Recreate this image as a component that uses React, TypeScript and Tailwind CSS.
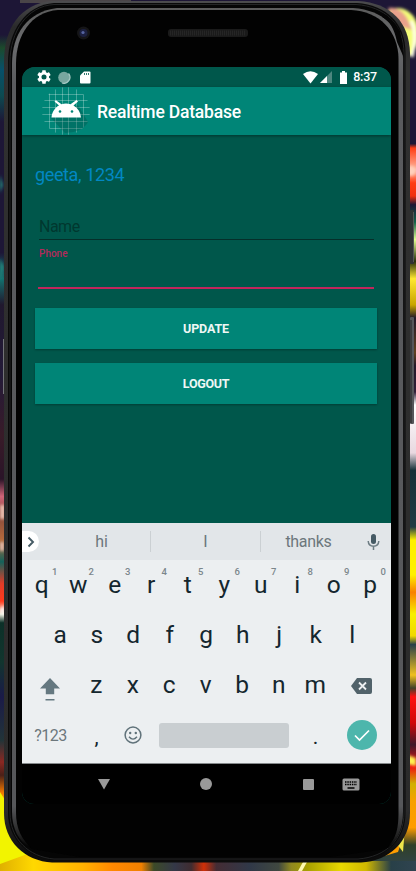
import React from 'react';

function Backdrop() {
  return (
    <svg className="absolute inset-0" width="416" height="871" viewBox="0 0 416 871">
      <defs>
        <filter id="soft" x="-20%" y="-20%" width="140%" height="140%">
          <feGaussianBlur stdDeviation="1.6" />
        </filter>
        <linearGradient id="leftEdge" x1="0" y1="0" x2="0" y2="1">
          <stop offset="0" stopColor="#1d1636" />
          <stop offset="0.04" stopColor="#1d1636" />
          <stop offset="0.055" stopColor="#1c4a2c" />
          <stop offset="0.08" stopColor="#07506a" />
          <stop offset="0.11" stopColor="#0d4a50" />
          <stop offset="0.14" stopColor="#1d1636" />
          <stop offset="0.29" stopColor="#1d1636" />
          <stop offset="0.32" stopColor="#14706e" />
          <stop offset="0.35" stopColor="#20182e" />
          <stop offset="0.43" stopColor="#231a38" />
          <stop offset="0.5" stopColor="#381b28" />
          <stop offset="0.55" stopColor="#2a1428" />
          <stop offset="0.57" stopColor="#d06478" />
          <stop offset="0.59" stopColor="#8a4a3c" />
          <stop offset="0.62" stopColor="#b46a3c" />
          <stop offset="0.645" stopColor="#14625a" />
          <stop offset="0.67" stopColor="#e03c28" />
          <stop offset="0.69" stopColor="#ff3a1c" />
          <stop offset="0.705" stopColor="#f0f0e0" />
          <stop offset="0.715" stopColor="#0c3028" />
          <stop offset="0.76" stopColor="#12352e" />
          <stop offset="0.8" stopColor="#1a1a48" />
          <stop offset="0.85" stopColor="#223438" />
          <stop offset="0.875" stopColor="#8a2822" />
          <stop offset="0.89" stopColor="#4a2018" />
          <stop offset="0.91" stopColor="#f07800" />
          <stop offset="0.93" stopColor="#e8f000" />
          <stop offset="0.96" stopColor="#f0ff20" />
          <stop offset="1" stopColor="#ffc800" />
        </linearGradient>
        <linearGradient id="rightEdge" x1="0" y1="0" x2="0" y2="1">
          <stop offset="0" stopColor="#1d1636" />
          <stop offset="0.165" stopColor="#1d1636" />
          <stop offset="0.17" stopColor="#ff3c14" />
          <stop offset="0.195" stopColor="#ffb8a0" />
          <stop offset="0.21" stopColor="#ff3c14" />
          <stop offset="0.225" stopColor="#f03010" />
          <stop offset="0.235" stopColor="#1d1636" />
          <stop offset="0.255" stopColor="#126048" />
          <stop offset="0.275" stopColor="#e0ff90" />
          <stop offset="0.3" stopColor="#28300c" />
          <stop offset="0.32" stopColor="#ffe830" />
          <stop offset="0.35" stopColor="#c8a400" />
          <stop offset="0.365" stopColor="#201828" />
          <stop offset="0.405" stopColor="#604020" />
          <stop offset="0.42" stopColor="#231828" />
          <stop offset="0.45" stopColor="#302038" />
          <stop offset="0.465" stopColor="#ffffff" />
          <stop offset="0.52" stopColor="#e8d8e0" />
          <stop offset="0.54" stopColor="#143038" />
          <stop offset="0.605" stopColor="#203c44" />
          <stop offset="0.62" stopColor="#fff000" />
          <stop offset="0.66" stopColor="#fff000" />
          <stop offset="0.68" stopColor="#f88000" />
          <stop offset="0.705" stopColor="#f8f000" />
          <stop offset="0.73" stopColor="#f0d800" />
          <stop offset="0.74" stopColor="#284048" />
          <stop offset="0.775" stopColor="#f0c020" />
          <stop offset="0.79" stopColor="#404028" />
          <stop offset="0.8" stopColor="#ff1010" />
          <stop offset="0.83" stopColor="#d00808" />
          <stop offset="0.855" stopColor="#401828" />
          <stop offset="0.88" stopColor="#f01010" />
          <stop offset="0.9" stopColor="#d0b000" />
          <stop offset="0.92" stopColor="#f8a000" />
          <stop offset="0.95" stopColor="#ff9c00" />
          <stop offset="0.97" stopColor="#304028" />
          <stop offset="1" stopColor="#304450" />
        </linearGradient>
        <linearGradient id="bottomEdge">
          <stop offset="0" stopColor="#e0b000" />
          <stop offset="0.08" stopColor="#ffd800" />
          <stop offset="0.2" stopColor="#ffb000" />
          <stop offset="0.27" stopColor="#ff8800" />
          <stop offset="0.34" stopColor="#f08000" />
          <stop offset="0.37" stopColor="#3c4a28" />
          <stop offset="0.42" stopColor="#343848" />
          <stop offset="0.46" stopColor="#402c30" />
          <stop offset="0.49" stopColor="#d03008" />
          <stop offset="0.52" stopColor="#442c34" />
          <stop offset="0.6" stopColor="#303848" />
          <stop offset="0.67" stopColor="#404840" />
          <stop offset="0.7" stopColor="#908820" />
          <stop offset="0.74" stopColor="#a8a000" />
          <stop offset="0.82" stopColor="#e8d800" />
          <stop offset="0.88" stopColor="#d0b800" />
          <stop offset="0.94" stopColor="#284048" />
          <stop offset="1" stopColor="#304450" />
        </linearGradient>
        <linearGradient id="rim" x1="0" y1="0" x2="0" y2="1">
          <stop offset="0" stopColor="#4c4c4e" />
          <stop offset="0.03" stopColor="#2a2a2b" />
          <stop offset="0.08" stopColor="#303030" />
          <stop offset="0.94" stopColor="#2b2b2b" />
          <stop offset="0.99" stopColor="#0c0c0c" />
        </linearGradient>
        <linearGradient id="shine" x1="0" y1="0" x2="0" y2="1">
          <stop offset="0" stopColor="#5c5c5c" />
          <stop offset="0.04" stopColor="#6b6c6e" />
          <stop offset="0.09" stopColor="#5a5b5e" />
          <stop offset="0.95" stopColor="#56575a" />
          <stop offset="0.985" stopColor="#222" />
          <stop offset="1" stopColor="#000" />
        </linearGradient>
      </defs>
      <rect width="416" height="871" fill="#1d1636" />
      <rect width="60" height="871" fill="url(#leftEdge)" />
      <rect x="360" width="56" height="871" fill="url(#rightEdge)" />
      <path d="M20 0H131V3H20Z" fill="#4a4548" />
      <g filter="url(#soft)">
        <ellipse cx="398" cy="34" rx="21" ry="26" fill="#f4ff78" />
        <path d="M388 8Q402 6 409 22L412 30L396 25Z" fill="#e9a18c" />
        <path d="M411 21Q418 34 412 57" stroke="#fffff0" strokeWidth="3" fill="none" />
        <path d="M0 175l3 10-3 8zM0 258l4 9-4 15z" fill="#20897e" />
        <path d="M0 505h5v14H0zM0 542h4v9H0z" fill="#e9bdad" />
        <circle cx="411" cy="171" r="5" fill="#ffd0bc" />
        <path d="M0 610l4-5v12z" fill="#fff" />
        <path d="M407 755l9 3v8l-9-2z" fill="#fff050" />
      </g>
      <path d="M0 862V830L40 855L140 861H416V871H0Z" fill="url(#bottomEdge)" />
      <path d="M0 792Q8 803 12 822Q18 840 33 852L0 864Z" fill="#f2f400" />
      <path d="M9 814Q12 834 26 850" stroke="#faffae" strokeWidth="5" opacity=".7" fill="none" />
      <path d="M298 871l5-9h4l-5 9z" fill="#fff9b0" />
      <path d="M409 820Q402 849 364 862L398 852Z" fill="#ff9d00" />
      <path d="M397 844l8-17-2 25z" fill="#eee64b" />

      <path d="M3.5 339V394" stroke="#737378" />
      <rect x="410" y="210" width="4" height="54" rx="1" fill="#303133" />
      <path d="M413.5 212V262" stroke="#555" />
      <rect x="410" y="317" width="4" height="107" rx="1" fill="#55565a" />
      <path d="M411 320V423" stroke="#222" />

      <path d="M52 1H358C391 3 409 22 410 53V813C410 842 389 861 361 862.5H52C25 861 4 842 4 813V62C4 28 20 4 52 1Z" fill="url(#rim)" />
      <path d="M54 3H357C386 5 405.500 23 405.500 53V813C405.500 839 387 858 359 860H54C28 858 8 839 8 813V62C8 31 26 5 54 3Z" fill="#090909" />
      <path d="M54 4.500H356C385 6.500 404 24 404 54V813C404 839 386 857 358 859H54C29 857 10 839 10 813V62C10 32 27 6 54 4.500Z" fill="#050505" stroke="#242526" strokeWidth="1" />
      <path d="M57 8H353C384 10 403 29 403 59V812C403 830 396 842 388 848H31C19 842 12 829 12 812V64C12 34 27 12 57 8Z" fill="url(#shine)" />
      <path d="M58 10H351C379 11 398.500 31 398.500 59V812C398.500 832 395 839 386 849L330 857H80L32 849C22 839 16 830 16 812V64C16 35 31 12 58 10Z" fill="#020202" />
      <path d="M382 17Q393 22 397 42L404 58L400 31Q392 17 382 13Z" fill="#050505" />
      <circle cx="83.500" cy="33" r="6.500" fill="#151517" />
      <circle cx="83.500" cy="33" r="4" fill="#1c2040" />
      <circle cx="83" cy="32.500" r="1.600" fill="#5664a0" />
      <rect x="168" y="29" width="80" height="8" rx="3" fill="#1a1a1a" />
      <path d="M170 33H246" stroke="#252525" strokeWidth="5" strokeDasharray="1 1" />
    </svg>
  );
}

function StatusBar() {
  return (
    <div className="flex h-5 items-center bg-[#00574b] pr-[14px] pl-[15px] text-white">
      <svg width="14" height="14" viewBox="2 2 20 20" fill="currentColor">
        <path d="M19.140 12.940c.04-.3.06-.61.06-.94 0-.32-.02-.64-.07-.94l2.030-1.580a.49.49 0 0 0 .12-.61l-1.920-3.320a.488.488 0 0 0-.59-.22l-2.390.96c-.5-.38-1.030-.7-1.620-.94l-.36-2.540a.484.484 0 0 0-.48-.41h-3.840c-.24 0-.43.17-.47.41l-.36 2.540c-.59.24-1.130.57-1.620.94l-2.390-.96c-.22-.08-.47 0-.59.22L2.740 8.870c-.12.21-.08.47.12.61l2.030 1.580c-.05.3-.09.63-.09.94s.02.64.07.94l-2.030 1.580a.49.49 0 0 0-.12.61l1.920 3.320c.12.22.37.29.59.22l2.390-.96c.5.38 1.030.7 1.620.94l.36 2.540c.05.24.24.41.48.41h3.840c.24 0 .44-.17.47-.41l.36-2.540c.59-.24 1.130-.56 1.620-.94l2.390.96c.22.08.47 0 .59-.22l1.920-3.320c.12-.22.07-.47-.12-.61zM12 15.600A3.600 3.600 0 1 1 12 8.400a3.600 3.600 0 0 1 0 7.200z" />
      </svg>
      <svg className="ml-[7px]" width="13" height="13" viewBox="0 0 13 13">
        <circle cx="6" cy="6.500" r="5.800" fill="#78a79f" />
        <path d="M10.500 2.500A6 6 0 0 1 4 12" fill="none" stroke="#a5c8c2" strokeWidth="1.300" />
      </svg>
      <svg className="ml-[9px]" width="11" height="13" viewBox="0 0 11 13">
        <path d="M4 .5H9.500Q10.500.5 10.500 1.500V11.500Q10.500 12.500 9.500 12.500H1Q0 12.500 0 11.500V4.500Z" fill="#fff" />
        <path d="M4.500 2V4M6.500 2V4M8.500 2V4" stroke="#00574b" strokeOpacity=".8" />
      </svg>
      <svg className="ml-auto" width="15" height="13" viewBox="0 0 15 13">
        <path d="M0 3Q7.500-2.500 15 3L7.500 12.500Z" fill="#fff" />
      </svg>
      <svg className="ml-[2px]" width="12" height="12" viewBox="0 0 12 12">
        <path d="M0 12L12 0V12Z" fill="#4d877f" />
        <path d="M0 12L7 5V12Z" fill="#fff" />
      </svg>
      <svg className="ml-2" width="7" height="13" viewBox="0 0 7 13">
        <path d="M2 0H5V1.500H7V13H0V1.500H2Z" fill="#fff" />
      </svg>
      <span className="ml-[6.500px] text-[12.500px] leading-none font-medium tracking-[-0.200px]">8:37</span>
    </div>
  );
}

function AppIcon() {
  return (
    <svg className="block" width="48" height="48" viewBox="0 0 48 48">
      <defs>
        <clipPath id="round"><circle cx="24" cy="24" r="24" /></clipPath>
      </defs>
      <g clipPath="url(#round)">
        <path d="M0 7.500H48M0 13.500H48M0 20.500H48M0 27.500H48M0 34.500H48M0 41.500H48M7.500 0V48M13.500 0V48M20.500 0V48M26.500 0V48M34.500 0V48M41.500 0V48" stroke="#fff" strokeOpacity=".3" strokeWidth=".9" />
      </g>
      <path d="M9 31L23 46Q41 45 46 35L36 18Z" fill="#003b35" opacity=".25" />
      <path d="M9.500 30.500C10 25 13 20.500 17 18.500L12.500 14.500L14 13.200L19.500 17.300Q24 15.800 28.500 17.300L34.500 13L36 14.500L31.500 18.500C36 21 38.500 25 39 30.500Z" fill="#fff" />
      <circle cx="18" cy="24.500" r="1.300" fill="#008577" />
      <circle cx="30" cy="24.500" r="1.300" fill="#008577" />
    </svg>
  );
}

function Key({ label, hint }: { label: string; hint?: string }) {
  return (
    <div className="relative w-[36.500px] text-center text-[24.500px] leading-[30px] text-[#14262e]">
      {label}
      {hint && (
        <span className="absolute top-[-4px] left-[28.500px] text-[9.500px] leading-[12px] font-medium text-[#7b868b]">{hint}</span>
      )}
    </div>
  );
}

function Keyboard() {
  return (
    <div className="h-[240px] bg-[#eceff1]">
      <div className="flex h-[37px] items-center bg-[#e2e6e9] text-[16px] text-[#6c777c]">
        <div className="flex h-[21px] w-[17px] items-center justify-center rounded-r-full bg-white">
          <svg width="8" height="12" viewBox="0 0 8 12">
            <path d="M1.500 1.500L6 6L1.500 10.500" fill="none" stroke="#455a64" strokeWidth="1.900" />
          </svg>
        </div>
        <div className="ml-[14px] w-[97px] pt-px text-center">hi</div>
        <div className="h-[21px] w-px bg-[#cbd0d3]" />
        <div className="w-[109px] pt-px text-center">I</div>
        <div className="h-[21px] w-px bg-[#cbd0d3]" />
        <div className="w-[95px] pt-px text-center tracking-[-0.300px]">thanks</div>
        <svg className="ml-[11px]" width="13" height="16" viewBox="0 0 13 16">
          <rect x="4" y="0" width="5" height="10" rx="2.500" fill="#455a64" />
          <path d="M1.200 7Q1.500 12.200 6.500 12.200Q11.500 12.200 11.800 7M6.500 12V16" fill="none" stroke="#6e7d84" strokeWidth="1.500" />
        </svg>
      </div>
      <div className="flex h-[50px] pt-[10px] pl-[1.500px]">
        {['q', 'w', 'e', 'r', 't', 'y', 'u', 'i', 'o', 'p'].map((k, i) => (
          <Key key={k} label={k} hint={String((i + 1) % 10)} />
        ))}
      </div>
      <div className="flex h-[50px] pt-[10px] pl-[20px]">
        {['a', 's', 'd', 'f', 'g', 'h', 'j', 'k', 'l'].map((k) => <Key key={k} label={k} />)}
      </div>
      <div className="flex h-[50px] pt-[10px]">
        <div className="flex w-[56px] justify-center pt-2">
          <svg width="20" height="23" viewBox="0 0 20 23" fill="#657880">
            <path d="M10 0L20 10.500H14.200V16.300H5.800V10.500H0Z" />
            <path d="M5.500 21H14.500V22.500H5.500Z" />
          </svg>
        </div>
        {['z', 'x', 'c', 'v', 'b', 'n', 'm'].map((k) => <Key key={k} label={k} />)}
        <div className="ml-[17px] pt-2">
          <svg width="21" height="16" viewBox="0 0 21 16">
            <path d="M6 0H19Q21 0 21 2V14Q21 16 19 16H6L0 8Z" fill="#51626a" />
            <path d="M8 4.500L15 11.500M15 4.500L8 11.500" stroke="#eceff1" strokeWidth="1.800" />
          </svg>
        </div>
      </div>
      <div className="flex h-[53px] items-center pb-[3px]">
        <div className="w-[57px] pt-px text-center text-[16px] tracking-[-0.500px] text-[#6c777c]">?123</div>
        <div className="w-[35px] pt-1 text-center text-[21px] leading-[26px] text-[#14262e]">,</div>
        <svg className="ml-[10px]" width="18" height="18" viewBox="0 0 18 18">
          <circle cx="9" cy="9" r="7.900" fill="none" stroke="#60727a" strokeWidth="1.500" />
          <circle cx="6.200" cy="7" r="1.200" fill="#60727a" />
          <circle cx="11.800" cy="7" r="1.200" fill="#60727a" />
          <path d="M5 10.700Q9 15.500 13 10.700" fill="none" stroke="#60727a" strokeWidth="1.400" />
        </svg>
        <div className="ml-[17px] h-[25px] w-[130px] rounded-[3px] bg-[#c9ced1]" />
        <div className="w-[53px] pt-1 text-center text-[21px] leading-[26px] text-[#14262e]">.</div>
        <div className="ml-[4.500px] flex size-[30px] items-center justify-center rounded-full bg-[#4db6ac]">
          <svg width="16" height="13" viewBox="0 0 16 13">
            <path d="M1 6.500L5.500 11L15 1.500" fill="none" stroke="#fff" strokeWidth="1.700" />
          </svg>
        </div>
      </div>
    </div>
  );
}

function NavBar() {
  return (
    <div className="flex h-[41px] items-center border-t border-[#85898b] bg-black pl-[76px]">
      <svg width="12" height="11" viewBox="0 0 12 11"><path d="M0 0H12L6 10.500Z" fill="#999" /></svg>
      <div className="ml-[90px] size-3 rounded-full bg-[#999]" />
      <div className="ml-[91px] size-[11px] rounded-[1px] bg-[#999]" />
      <svg className="ml-[28px]" width="18" height="13" viewBox="0 0 18 13">
        <rect x=".5" y=".5" width="17" height="12" rx="1.500" fill="#999" />
        <path d="M3 4H15M3 6.500H15" stroke="#000" strokeWidth="1.500" strokeDasharray="1.500 .8" />
        <path d="M5.500 10H12.500" stroke="#000" strokeWidth="1.300" />
      </svg>
    </div>
  );
}

export default function App() {
  return (
    <div className="relative h-[871px] w-[416px] overflow-hidden font-['Roboto',sans-serif]">
      <Backdrop />
      <div className="relative pt-[67px] pl-[22px]">
        <main className="flex h-[737px] w-[369px] flex-col overflow-hidden rounded-t-[13px] rounded-b-[12px] bg-[#00574b]">
          <StatusBar />
          <header className="flex h-12 shrink-0 items-center bg-[#008577] pl-5 text-white shadow-[0_1px_3px_rgba(0,0,0,0.4)]">
            <AppIcon />
            <h1 className="ml-[7px] pt-0.5 text-[17.500px] font-medium tracking-[-0.200px] whitespace-nowrap">Realtime Database</h1>
          </header>
          <section className="h-[388px] shrink-0 pt-[29px] pr-[14px] pl-[13px]">
            <p className="h-[50px] text-[18px] leading-[22px] tracking-[-0.380px] text-[#0288c3]">geeta, 1234</p>
            <div className="mr-[3px] ml-[4px] h-[26px] border-b border-[#052f2a] text-[16px] leading-[26px] tracking-[-0.500px] text-[#00382f]">Name</div>
            <div className="mx-[3px] h-[49px] border-b-2 border-[#c2255c] pt-[7px] pl-px text-[10px] leading-[13px] font-medium text-[#b32a5b]">Phone</div>
            <button className="mt-[19px] block h-[41px] w-full bg-[#008577] pt-px text-[12.500px] font-bold tracking-[-0.150px] text-[#eef7f5] shadow-[0_1px_2px_rgba(0,0,0,0.3)]">UPDATE</button>
            <button className="mt-[14px] block h-[41px] w-full bg-[#008577] pt-px text-[12.500px] font-bold tracking-[-0.300px] text-[#eef7f5] shadow-[0_1px_2px_rgba(0,0,0,0.3)]">LOGOUT</button>
          </section>
          <Keyboard />
          <NavBar />
        </main>
      </div>
    </div>
  );
}
